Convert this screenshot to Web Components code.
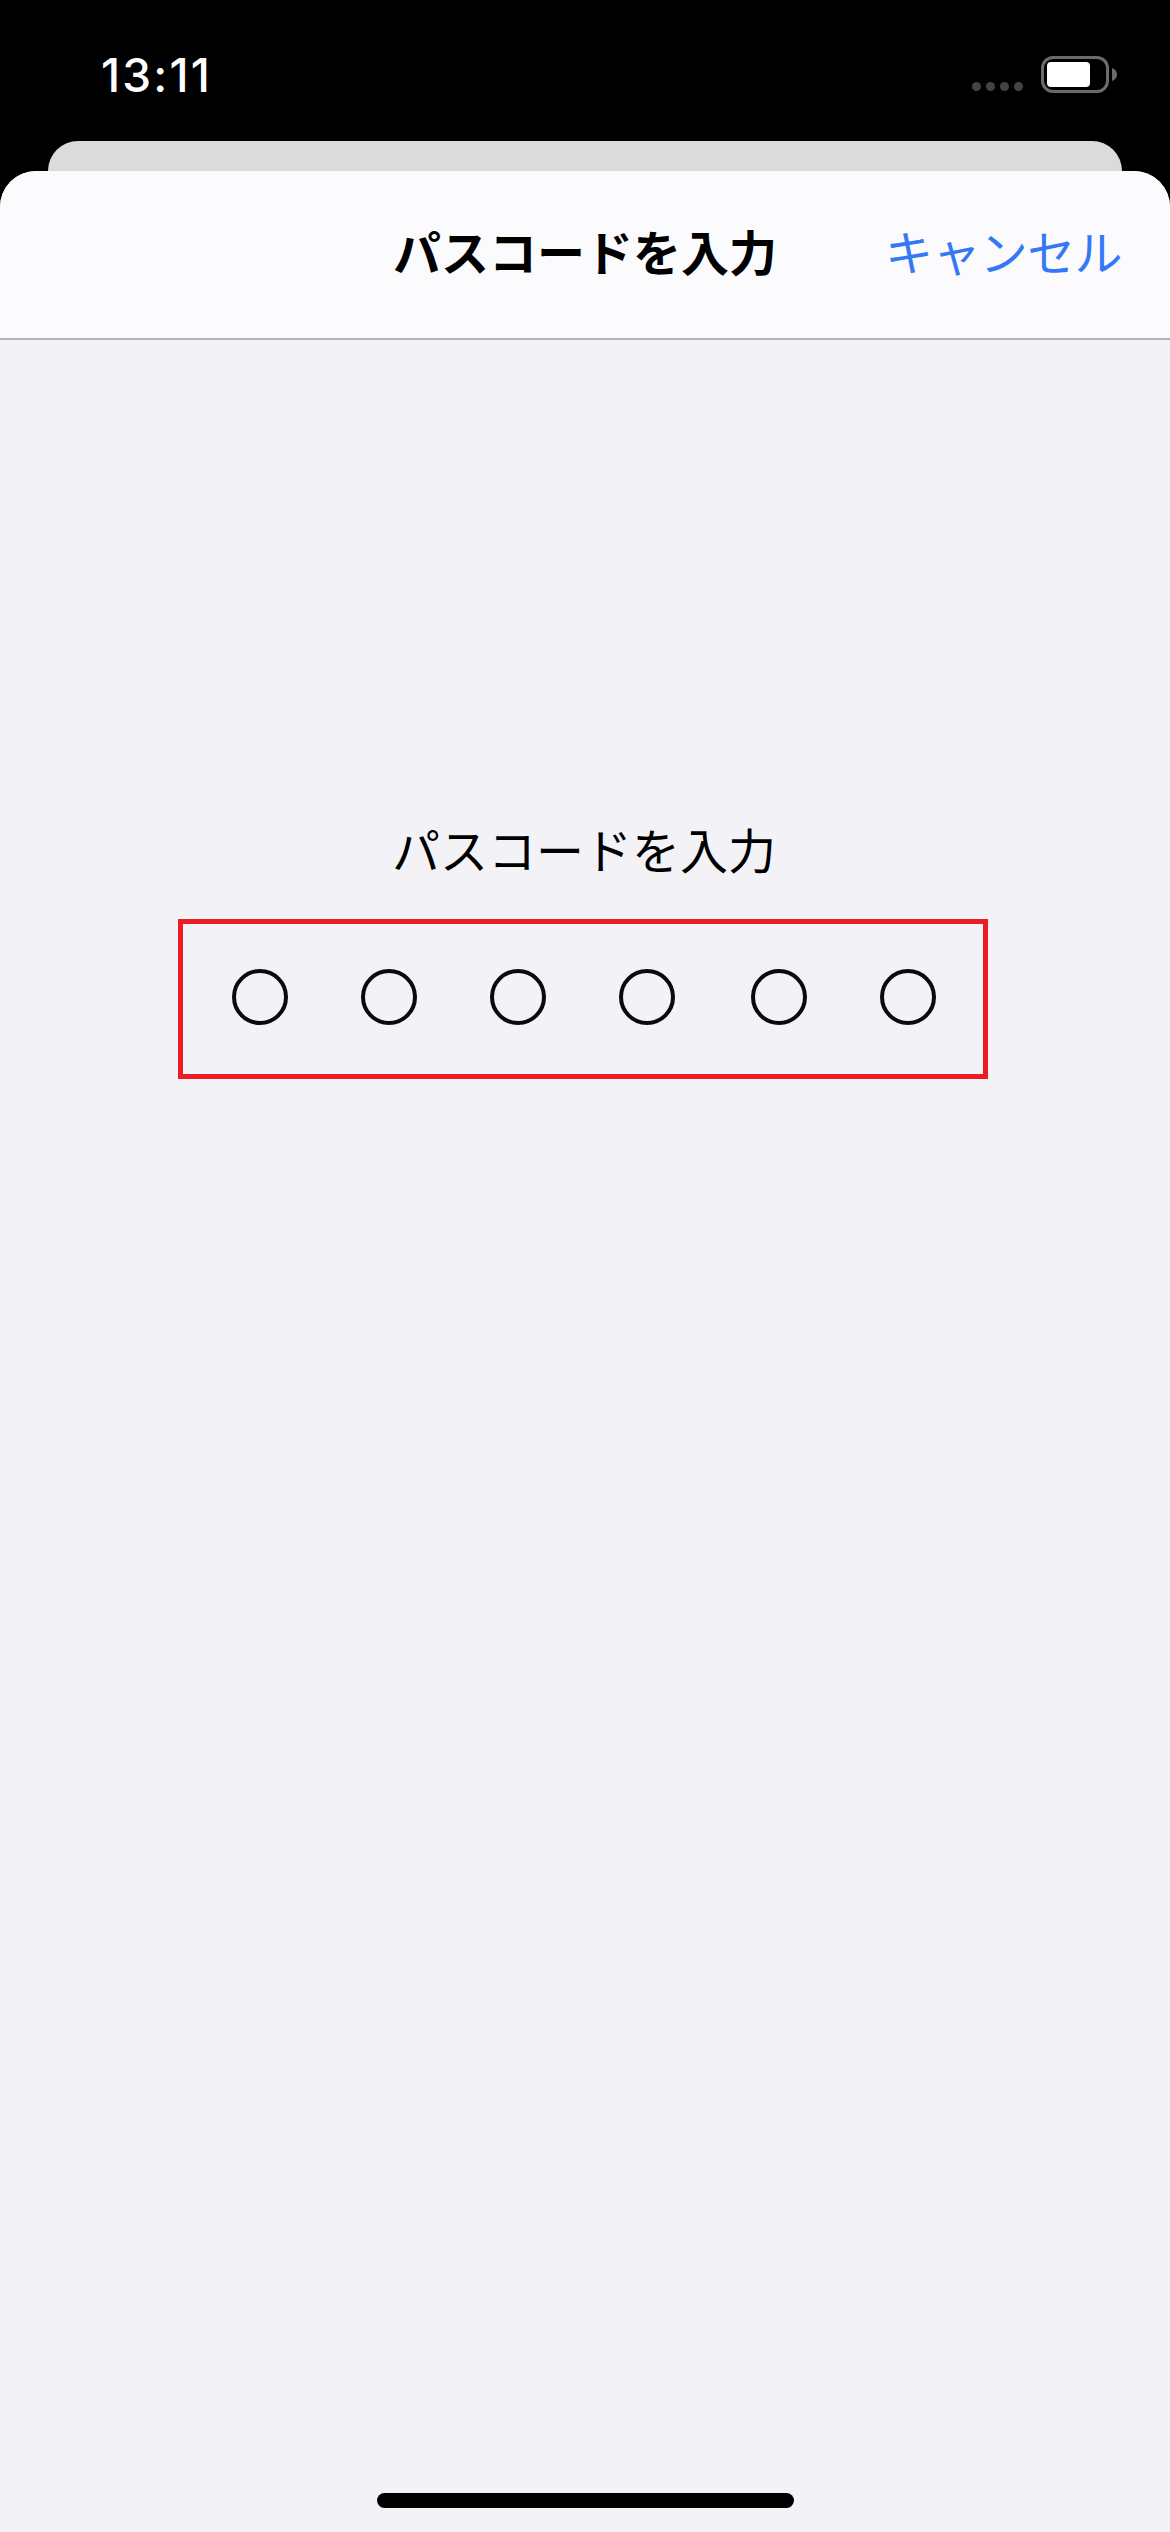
<!DOCTYPE html>
<html lang="ja"><head><meta charset="utf-8"><title>パスコードを入力</title>
<style>html,body{margin:0;padding:0;background:#000}</style></head>
<body>
<phone-screen>
  <status-bar time="13:11"></status-bar>
  <back-card></back-card>
  <modal-sheet>
    <sheet-header heading="パスコードを入力" action="キャンセル"></sheet-header>
    <passcode-panel label="パスコードを入力"></passcode-panel>
    <home-bar></home-bar>
  </modal-sheet>
</phone-screen>
<script>
const def=(name,html,init)=>customElements.define(name,class extends HTMLElement{
  constructor(){super();this.attachShadow({mode:'open'}).innerHTML=html;}
  connectedCallback(){init&&init(this,this.shadowRoot);}
});
const JP='"Noto Sans CJK JP","Noto Sans",sans-serif';
def('phone-screen',`<style>:host{display:flex;flex-direction:column;width:1170px;height:2532px;background:#000;overflow:hidden}</style><slot></slot>`);
def('status-bar',`<style>
:host{display:flex;box-sizing:border-box;height:141px;padding:0 53px 0 101px;justify-content:space-between;color:#fff}
.t{font:500 46px/56px Inter,sans-serif;margin-top:47px;letter-spacing:2.200px}
.r{display:flex;align-items:flex-start;margin-top:56px}
.dots{display:flex;gap:5px;margin:26px 18px 0 0}
.dots i{width:9px;height:9px;border-radius:50%;background:#444}
.bat{box-sizing:border-box;width:68px;height:37px;border:3px solid #6b6b6b;border-radius:12px;padding:3px;background:#000}
.bat b{display:block;width:43px;height:100%;background:#fff;border-radius:4px}
svg{margin:12px 0 0 3px;display:block}
</style><div class="t"></div><div class="r"><div class="dots"><i></i><i></i><i></i><i></i></div><div class="bat"><b></b></div><svg width="5" height="13" viewBox="0 0 5 13"><path d="M0 0C3 1 5 3.500 5 6.500S3 12 0 13Z" fill="#6b6b6b"/></svg></div>`,
(h,s)=>{s.querySelector('.t').textContent=h.getAttribute('time');});
def('back-card',`<style>:host{display:block;height:30px;margin:0 48px;background:#dbdbdb;border-radius:30px 30px 0 0}</style>`);
def('modal-sheet',`<style>:host{display:flex;flex-direction:column;flex:1;background:#f2f2f7;border-radius:36px 36px 0 0;overflow:hidden}</style><slot></slot>`);
def('sheet-header',`<style>
:host{display:grid;grid-template-columns:1fr auto 1fr;align-items:center;box-sizing:border-box;height:169px;background:#fbfbfd;border-bottom:2px solid #b4b4b8;font-family:${JP}}
.h{grid-column:2;font-weight:700;font-size:48px;line-height:60px;color:#000;margin:-9px 0 0 0}
.a{grid-column:3;justify-self:end;font-size:48px;line-height:60px;letter-spacing:-.6px;color:#3478f6;margin:-9px 48px 0 0}
</style><div class="h"></div><div class="a"></div>`,
(h,s)=>{s.querySelector('.h').textContent=h.getAttribute('heading');s.querySelector('.a').textContent=h.getAttribute('action');});
def('passcode-panel',`<style>
:host{display:flex;flex-direction:column;align-items:center;flex:1;padding:478px 4px 0 0;font-family:${JP}}
.l{font-size:48px;line-height:60px;color:#000;margin-left:2px}
.box{box-sizing:border-box;display:flex;justify-content:center;align-items:center;gap:76px;width:810px;height:160px;margin-top:41px;padding:0 0 5px 2px;border:5px solid #ee1c25}
.g{display:flex;gap:73px}
.g i{box-sizing:border-box;display:block;width:56px;height:56px;border:4px solid #0a0a0a;border-radius:50%}
</style><div class="l"></div><div class="box"><div class="g"><i></i><i></i><i></i><i></i></div><div class="g"><i></i><i></i></div></div>`,
(h,s)=>{s.querySelector('.l').textContent=h.getAttribute('label');});
def('home-bar',`<style>:host{display:block;align-self:center;width:417px;height:15px;margin:0 0 24px;background:#000;border-radius:8px}</style>`);
</script>
</body></html>
